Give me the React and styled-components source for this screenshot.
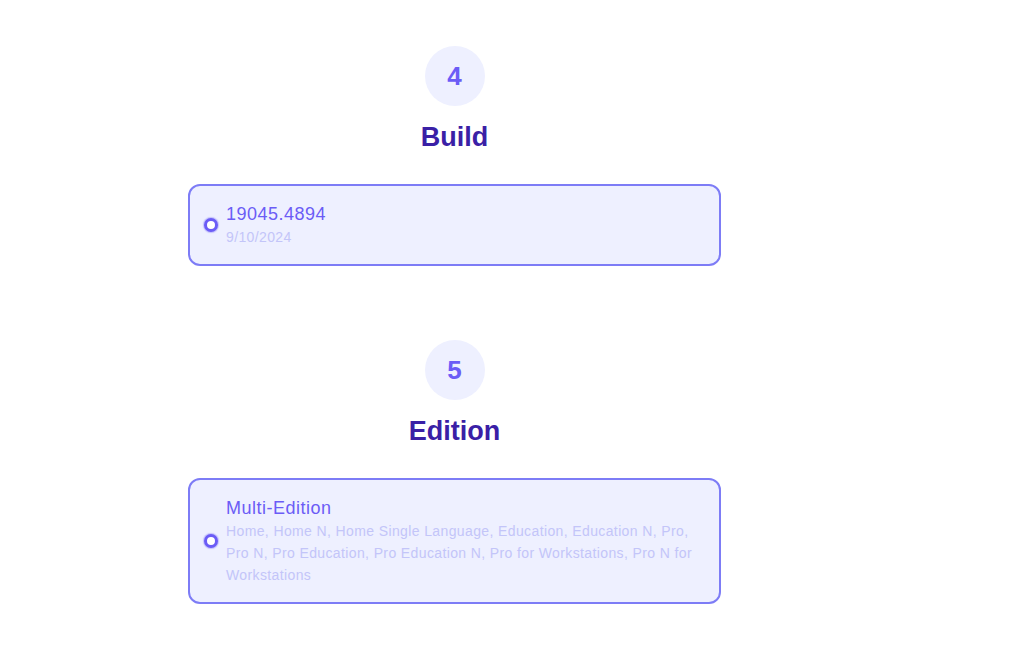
import React from "react";
import styled, { createGlobalStyle } from "styled-components";

const GlobalStyle = createGlobalStyle`
  body {
    margin: 0;
    background: #ffffff;
    font-family: "Liberation Sans", Arial, sans-serif;
  }
`;

const Page = styled.div`
  padding: 46px 0 40px 188px;
`;

const Column = styled.div`
  width: 533px;
  display: flex;
  flex-direction: column;
  gap: 74px;
`;

const Step = styled.section`
  display: flex;
  flex-direction: column;
  align-items: center;
`;

const Badge = styled.div`
  width: 60px;
  height: 60px;
  border-radius: 50%;
  background: #eef0ff;
  color: #6b5cf6;
  font-size: 26px;
  font-weight: 700;
  display: flex;
  align-items: center;
  justify-content: center;
`;

const Title = styled.h2`
  margin: 14px 0 0 0;
  font-size: 27px;
  line-height: 34px;
  font-weight: 700;
  color: #3a20a6;
`;

const Card = styled.div`
  box-sizing: border-box;
  width: 100%;
  margin-top: 30px;
  border: 2px solid #7d7cf6;
  border-radius: 12px;
  background: #eef0ff;
  padding: 16px 20px 16px 14px;
  display: flex;
  align-items: center;
  gap: 8px;
`;

const Radio = styled.span`
  flex: none;
  width: 8px;
  height: 8px;
  border-radius: 50%;
  border: 3px solid #6b5cf6;
  background: #ffffff;
  box-shadow: 0 0 1px 1px rgba(107, 92, 246, 0.35);
`;

const Body = styled.div`
  display: flex;
  flex-direction: column;
`;

const Name = styled.div`
  font-size: 18px;
  line-height: 24px;
  letter-spacing: 0.5px;
  color: #6b5cf6;
`;

const Detail = styled.div`
  font-size: 14px;
  line-height: 22px;
  letter-spacing: 0.38px;
  color: #c3c5f9;
`;

const steps = [
  { n: 4, title: "Build", name: "19045.4894", detail: "9/10/2024" },
  {
    n: 5,
    title: "Edition",
    name: "Multi-Edition",
    detail:
      "Home, Home N, Home Single Language, Education, Education N, Pro, Pro N, Pro Education, Pro Education N, Pro for Workstations, Pro N for Workstations",
  },
];

export default function App() {
  return (
    <>
      <GlobalStyle />
      <Page>
        <Column>
          {steps.map((s) => (
            <Step key={s.n}>
              <Badge>{s.n}</Badge>
              <Title>{s.title}</Title>
              <Card>
                <Radio />
                <Body>
                  <Name>{s.name}</Name>
                  <Detail>{s.detail}</Detail>
                </Body>
              </Card>
            </Step>
          ))}
        </Column>
      </Page>
    </>
  );
}
